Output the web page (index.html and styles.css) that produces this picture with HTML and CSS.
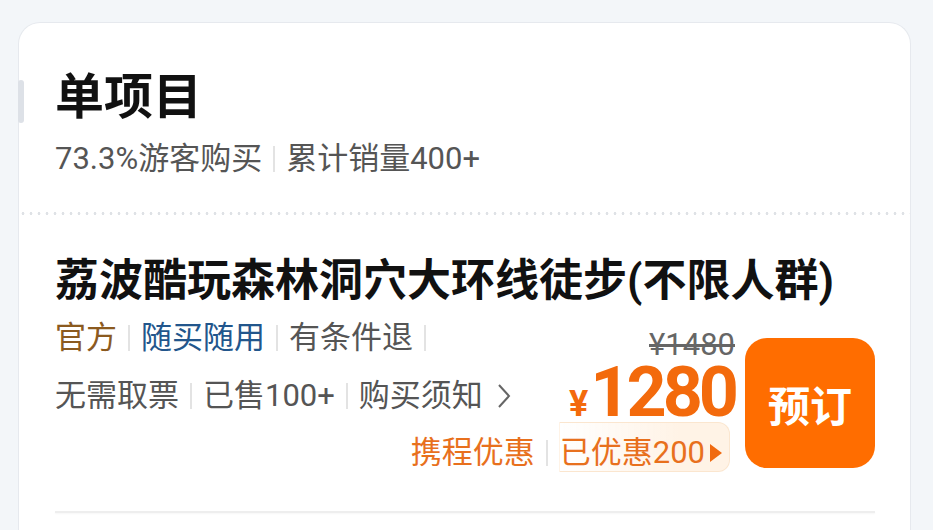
FILE: index.html
```html
<!DOCTYPE html>
<html lang="zh-CN">
<head>
  <meta charset="UTF-8" />
  <meta name="viewport" content="width=device-width, initial-scale=1.0"/>
  <title>单项目</title>
  <link rel="stylesheet" href="styles.css">
</head>
<body>
  <div class="card">
    <div class="card-tab"></div>

    <div class="section-head">
      <h2 class="section-title">单项目</h2>
      <div class="section-sub">
        <span>73.3%游客购买</span>
        <span class="sep"></span>
        <span>累计销量400+</span>
      </div>
    </div>

    <div class="dotted"></div>

    <div class="product">
      <h3 class="product-name">荔波酷玩森林洞穴大环线徒步(不限人群)</h3>

      <div class="deal">
        <div class="tags">
          <div class="tag-row">
            <span class="tag-official">官方</span>
            <span class="sep"></span>
            <span class="tag-anytime">随买随用</span>
            <span class="sep"></span>
            <span>有条件退</span>
            <span class="sep"></span>
          </div>
          <div class="tag-row">
            <span>无需取票</span>
            <span class="sep"></span>
            <span>已售100+</span>
            <span class="sep"></span>
            <span>购买须知</span>
            <svg class="chevron" width="14" height="26" viewBox="0 0 14 26">
              <polyline points="2,2 12,13 2,24" fill="none" stroke="#666" stroke-width="2"/>
            </svg>
          </div>
        </div>

        <div class="price">
          <div class="price-old">¥1480</div>
          <div class="price-now"><span class="yen">¥</span>1280</div>
        </div>

        <div class="promo">
          <span>携程优惠</span>
          <span class="sep"></span>
          <span class="promo-chip">
            已优惠200
            <svg class="promo-arrow" width="14" height="20" viewBox="0 0 14 20">
              <polygon points="1,1 13,10 1,19" fill="#f06a10"/>
            </svg>
          </span>
        </div>

        <button class="book-btn">预订</button>
      </div>

      <div class="divider"></div>
    </div>
  </div>
</body>
</html>
```

FILE: styles.css
```css
body {
  margin: 0;
  padding: 22px 22px 0 18px;
  height: 530px;
  box-sizing: border-box;
  overflow: hidden;
  background-color: #f3f6f9;
  font-family: Roboto, "Noto Sans CJK SC", sans-serif;
  color: #555;
}

.card {
  position: relative;
  background: #fff;
  border: 1px solid #e6e9ee;
  border-bottom: none;
  border-radius: 22px 22px 0 0;
  height: 600px;
}

/* little grey handle on the left edge */
.card-tab {
  position: absolute;
  left: -1px;
  top: 57px;
  width: 6px;
  height: 43px;
  border-radius: 3px;
  background: #dde1e7;
}

.section-head {
  padding: 47px 36px 0 36px;
}

.section-title {
  margin: 0;
  font-size: 49px;
  line-height: 56px;
  font-weight: 700;
  color: #111;
}

.section-sub {
  display: flex;
  align-items: center;
  margin-top: 15px;
  font-size: 31px;
  line-height: 36px;
  color: #555;
}

.sep {
  display: inline-block;
  width: 2px;
  height: 26px;
  margin: 0 11px;
  background: #e3e3e3;
}

.dotted {
  margin-top: 35px;
  height: 3px;
  background-image: radial-gradient(circle, #dfe2e6 1.3px, transparent 1.6px);
  background-size: 8px 3px;
}

.product {
  padding: 40px 35px 0 36px;
}

.product-name {
  margin: 0;
  font-size: 44px;
  line-height: 52px;
  font-weight: 700;
  color: #111;
  white-space: nowrap;
}

.deal {
  display: grid;
  grid-template-columns: 1fr auto 130px;
  grid-template-rows: 117px 50px;
  column-gap: 10px;
  margin-top: -2px;
}

.tags {
  grid-column: 1;
  grid-row: 1;
  padding-top: 4px;
}

.tag-row {
  display: flex;
  align-items: center;
  height: 58px;
  font-size: 31px;
  line-height: 40px;
  color: #555;
  white-space: nowrap;
}

.tag-official {
  color: #8b5a1f;
}

.tag-anytime {
  color: #22568c;
}

.chevron {
  margin-left: 14px;
}

.price {
  grid-column: 2;
  grid-row: 1;
  text-align: right;
  padding-top: 22px;
}

.price-old {
  font-size: 31px;
  line-height: 36px;
  color: #666;
  text-decoration: line-through;
}

.price-now {
  margin-top: 1px;
  font-size: 70px;
  line-height: 56px;
  font-weight: 700;
  color: #f36a0c;
  letter-spacing: -4px;
}

.price-now .yen {
  font-size: 36px;
  letter-spacing: 0;
  margin-right: 2px;
}

.promo {
  grid-column: 1 / 3;
  grid-row: 2;
  justify-self: end;
  display: flex;
  align-items: center;
  box-sizing: border-box;
  height: 50px;
  padding-top: 12px;
  margin-right: 5px;
  font-size: 31px;
  line-height: 40px;
  color: #e8701d;
  white-space: nowrap;
}

.promo-chip {
  display: flex;
  align-items: center;
  box-sizing: border-box;
  height: 50px;
  margin-top: -12px;
  padding: 12px 6px 0 0;
  border: 1px solid #fbe6cf;
  border-left-color: transparent;
  border-radius: 0 12px 12px 0;
  background: linear-gradient(to right, rgba(255, 244, 232, 0), #fff3e6 70%);
}

.promo-arrow {
  margin-left: 4px;
}

.book-btn {
  grid-column: 3;
  grid-row: 1 / 3;
  align-self: start;
  margin-top: 33px;
  width: 130px;
  height: 130px;
  border: none;
  border-radius: 22px;
  background: #ff6d00;
  color: #fff;
  font-family: "Noto Sans CJK SC", sans-serif;
  font-size: 42px;
  font-weight: 700;
  cursor: pointer;
}

.divider {
  margin-top: 39px;
  height: 2px;
  background: #eeeeee;
  box-shadow: 0 1px 2px rgba(0, 0, 0, 0.04);
}
```
